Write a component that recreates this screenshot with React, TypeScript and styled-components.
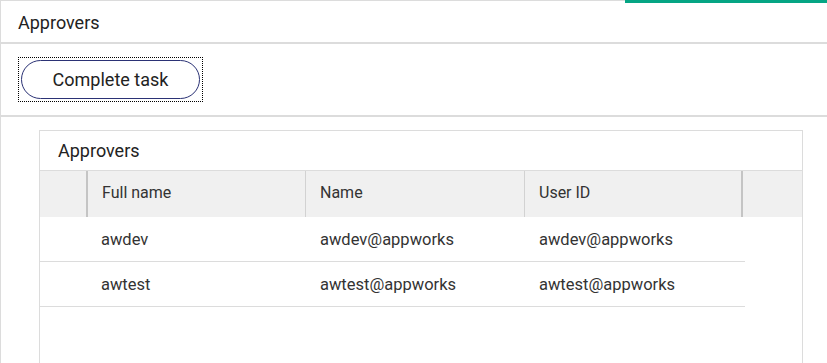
import { createGlobalStyle } from "styled-components";
import styled from "styled-components";

const GlobalStyle = createGlobalStyle`
  html, body {
    margin: 0;
    padding: 0;
    background: #fff;
  }
  body {
    font-family: Roboto, "Liberation Sans", Arial, sans-serif;
    color: #222;
  }
`;

const Page = styled.div`
  width: 827px;
  min-height: 363px;
  box-sizing: border-box;
  border-left: 1px solid #dcdcdc;
  display: flex;
  flex-direction: column;
  overflow: hidden;
`;

const TopBar = styled.div`
  display: flex;
  align-items: flex-start;
  height: 3px;
`;

const TopRule = styled.div`
  flex: 1;
  height: 1px;
  background: #dcdcdc;
`;

const Accent = styled.div`
  width: 202px;
  height: 3px;
  background: #05a584;
`;

const Header = styled.div`
  height: 39px;
  display: flex;
  align-items: center;
  padding-left: 17px;
  font-size: 18px;
  color: #222;
`;

const Divider = styled.div`
  height: 2px;
  background: #dcdcdc;
`;

const Toolbar = styled.div`
  padding: 13px 0 13px 17px;
  display: flex;
`;

const FocusRing = styled.div`
  display: inline-flex;
  padding: 2px;
  border: 1px dotted #000;
`;

const Button = styled.button`
  width: 179px;
  height: 39px;
  border: 1px solid #2b3275;
  border-radius: 20px;
  background: #fff;
  font-family: Roboto, "Liberation Sans", Arial, sans-serif;
  font-size: 18px;
  color: #222;
  outline: none;
  cursor: pointer;
`;

const Content = styled.div`
  flex: 1;
  display: flex;
  padding: 13px 24px 0 38px;
`;

const Panel = styled.div`
  flex: 1;
  border: 1px solid #dcdcdc;
  border-bottom: none;
  min-height: 240px;
`;

const PanelTitle = styled.div`
  height: 39px;
  display: flex;
  align-items: center;
  padding-left: 18px;
  font-size: 18px;
  color: #222;
`;

const HeadRow = styled.div`
  display: grid;
  grid-template-columns: 46px 219px 219px 217px 1fr;
  height: 46px;
  border-top: 1px solid #dcdcdc;
  background: #f0f0f0;
`;

const HeadCell = styled.div<{ $edge?: "strong" | "light" }>`
  display: flex;
  align-items: center;
  padding: 0 0 4px 14px;
  font-size: 16px;
  color: #333;
  border-left: ${(p) =>
    p.$edge === "strong" ? "2px solid #c4c4c4" : p.$edge === "light" ? "1px solid #d2d2d2" : "none"};
`;

const Body = styled.div`
  width: 705px;
`;

const Row = styled.div`
  display: grid;
  grid-template-columns: 46px 219px 219px 1fr;
  height: 44px;
  border-bottom: 1px solid #dcdcdc;
`;

const Cell = styled.div`
  display: flex;
  align-items: center;
  padding-left: 15px;
  font-size: 16.5px;
  color: #333;
`;

const approvers = [
  { fullName: "awdev", name: "awdev@appworks", userId: "awdev@appworks" },
  { fullName: "awtest", name: "awtest@appworks", userId: "awtest@appworks" },
];

export default function App() {
  return (
    <>
      <GlobalStyle />
      <Page>
        <TopBar>
          <TopRule />
          <Accent />
        </TopBar>
        <Header>Approvers</Header>
        <Divider />
        <Toolbar>
          <FocusRing>
            <Button>Complete task</Button>
          </FocusRing>
        </Toolbar>
        <Divider />
        <Content>
          <Panel>
            <PanelTitle>Approvers</PanelTitle>
            <HeadRow>
              <HeadCell />
              <HeadCell $edge="strong">Full name</HeadCell>
              <HeadCell $edge="light">Name</HeadCell>
              <HeadCell $edge="light">User ID</HeadCell>
              <HeadCell $edge="strong" />
            </HeadRow>
            <Body>
              {approvers.map((a) => (
                <Row key={a.fullName}>
                  <Cell />
                  <Cell>{a.fullName}</Cell>
                  <Cell>{a.name}</Cell>
                  <Cell>{a.userId}</Cell>
                </Row>
              ))}
            </Body>
          </Panel>
        </Content>
      </Page>
    </>
  );
}
